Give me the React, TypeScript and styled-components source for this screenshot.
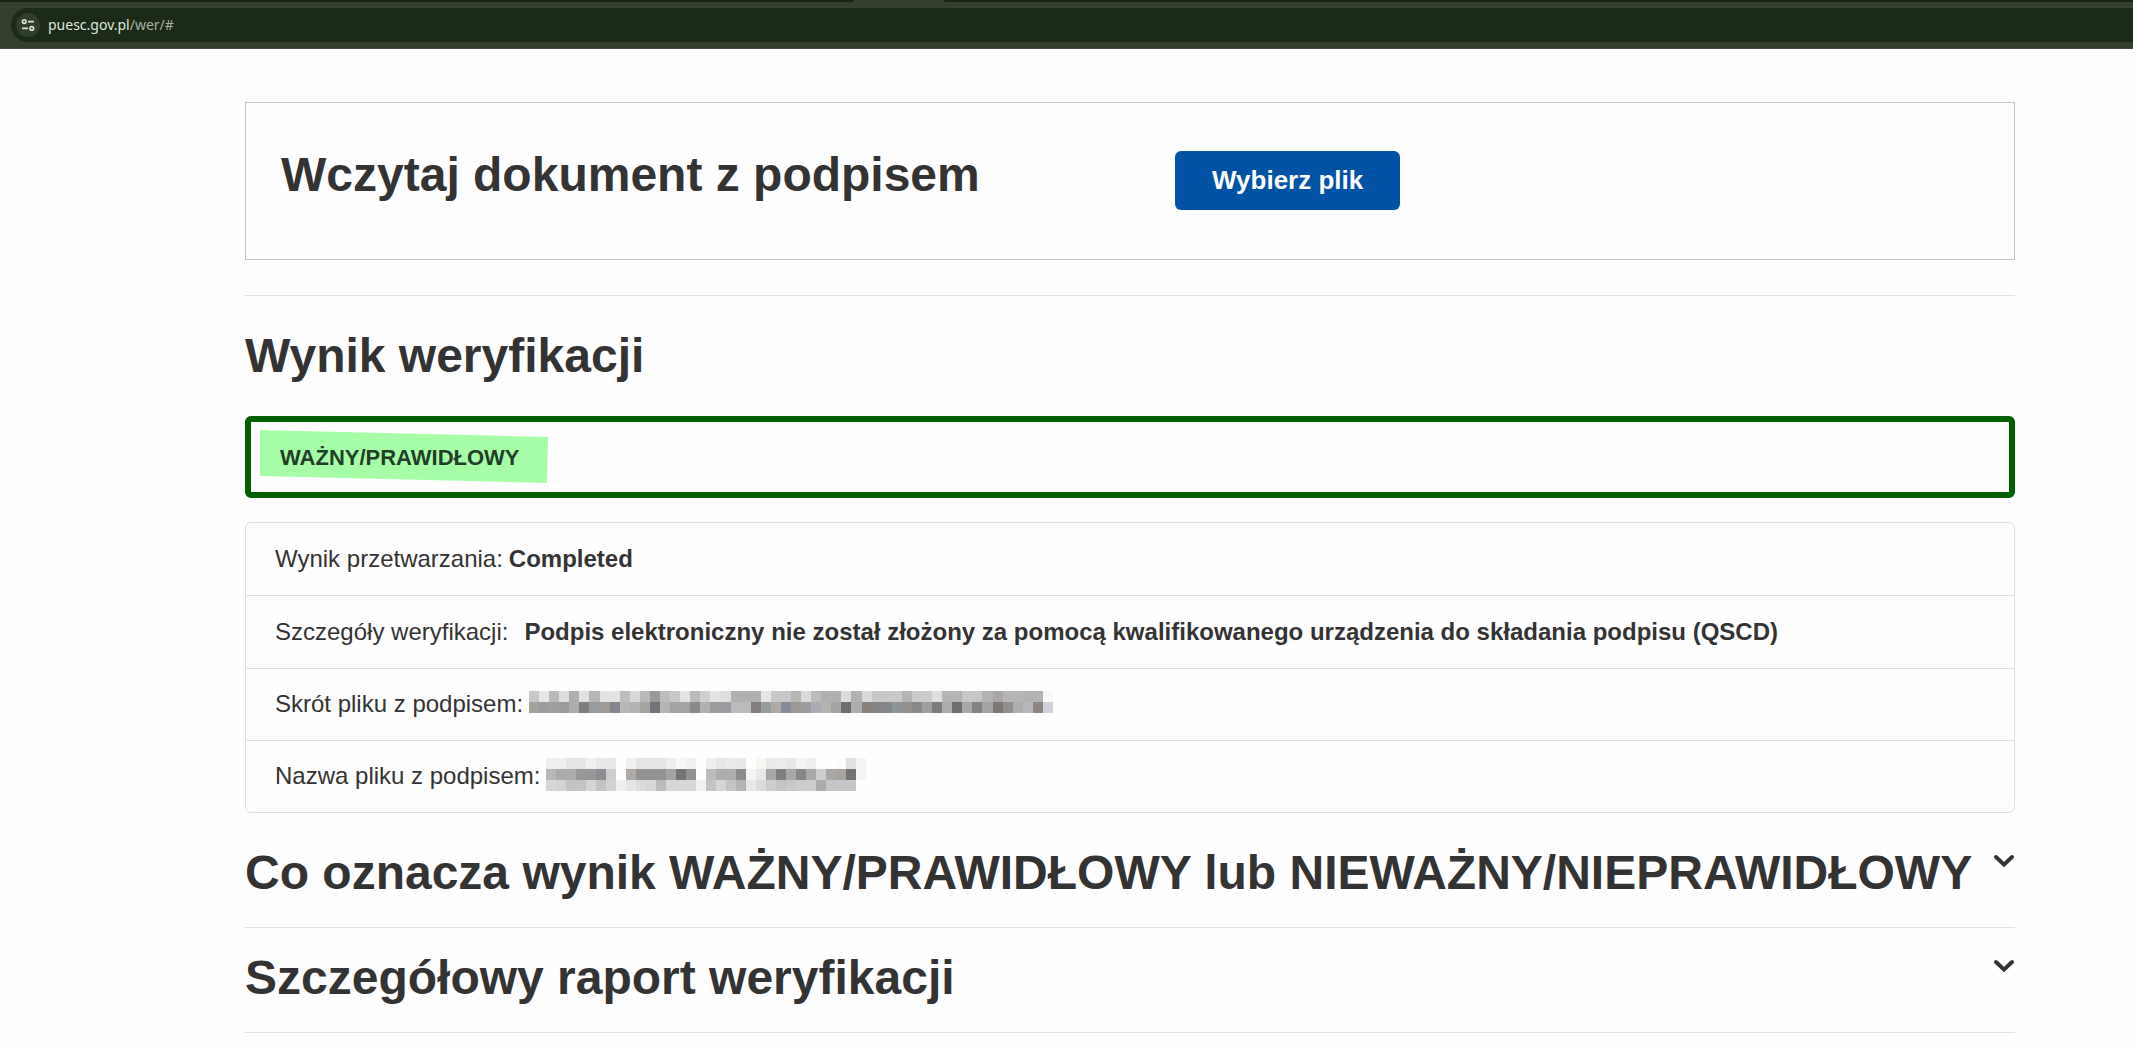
import React, { useRef, useState } from "react";
import styled, { createGlobalStyle } from "styled-components";

const GlobalStyle = createGlobalStyle`
  *, *::before, *::after { box-sizing: border-box; }
  body {
    margin: 0;
    background: #fefefe;
    color: #333333;
    font-family: "Liberation Sans", Arial, sans-serif;
    font-size: 24px;
    line-height: 36px;
  }
`;

const BrowserBar = styled.header`
  background: #333f2f;
  border-bottom: 1px solid #4a4b45;
`;

const TabStrip = styled.div`
  display: flex;
  height: 2px;
  padding-left: 40%;
  background: #172413;
`;

const ActiveTab = styled.div`
  width: 92px;
  border-radius: 2px 2px 0 0;
  background: #333f2f;
`;

const AddressBar = styled.div`
  display: flex;
  align-items: center;
  gap: 8px;
  height: 34px;
  margin: 6px 0 6px 11px;
  padding-left: 5px;
  border-radius: 17px 0 0 17px;
  background: #1c2a18;
`;

const SiteInfo = styled.button`
  display: grid;
  place-items: center;
  width: 24px;
  height: 24px;
  padding: 0;
  border: 0;
  border-radius: 50%;
  background: #303e2d;
  color: #dbe6d4;
`;

const Url = styled.div`
  color: #a9b3a4;
  font-family: "Noto Sans", sans-serif;
  font-size: 14px;
  line-height: 20px;
`;

const Host = styled.span`
  color: #dfe6da;
`;

const Page = styled.main`
  padding: 53px 118px 0 245px;
`;

const Heading = styled.h2`
  margin: 0;
  font-size: 48px;
  font-weight: 700;
  line-height: 58px;
`;

const UploadCard = styled.section`
  display: grid;
  grid-template-columns: 894px 1fr;
  align-items: start;
  padding: 43px 35px 49px;
  border: 1px solid #c2c2c2;
`;

const PickButton = styled.button`
  justify-self: start;
  margin-top: 5px;
  padding: 12px 37px;
  border: 0;
  border-radius: 6px;
  background: #0052a5;
  color: #ffffff;
  font: 700 26px/35px "Liberation Sans", Arial, sans-serif;
`;

const Divider = styled.hr`
  margin: 35px 0 31px;
  border: 0;
  border-top: 1px solid #e0e0e0;
`;

const StatusBox = styled.div`
  margin-top: 31px;
  padding: 18px 29px 16px;
  border: 6px solid #005f00;
  border-radius: 6px;
  font-size: 22px;
  font-weight: 700;
`;

const Marked = styled.strong`
  position: relative;
  display: inline-block;
  color: #1f4027;
  isolation: isolate;
`;

const Marker = styled.svg`
  position: absolute;
  z-index: -1;
  top: -10px;
  left: -20px;
  width: 288px;
  height: 53px;
`;

const Details = styled.ul`
  display: grid;
  grid-auto-rows: 1fr;
  min-height: 291px;
  margin: 24px 0 10px;
  padding: 0;
  border: 1px solid #dedede;
  border-radius: 6px;
  list-style: none;
`;

const DetailRow = styled.li<{ $gap?: number }>`
  display: flex;
  align-items: center;
  gap: ${({ $gap = 6 }) => $gap}px;
  padding: 17px 29px;

  & + & {
    border-top: 1px solid #dedede;
  }
`;

const Mosaic = styled.svg<{ $width: number; $rows: number }>`
  width: ${({ $width }) => $width}px;
  height: ${({ $rows }) => $rows * 11}px;
  margin-bottom: 4px;
`;

const AccordionItem = styled.section`
  border-bottom: 1px solid #e0e0e0;
`;

const AccordionButton = styled.button`
  display: flex;
  justify-content: space-between;
  align-items: flex-start;
  width: 100%;
  padding: 21px 0 25px;
  border: 0;
  background: none;
  color: inherit;
  font: inherit;
  text-align: left;
`;

const Chevron = styled.svg`
  flex: none;
  width: 22px;
  height: 22px;
  margin-top: 7px;
`;

const Panel = styled.p`
  margin: 0 0 24px;
`;

const hashCells = [
  "c8c6c6 e6e6e6 b9b9b9 dcdcdc aeaeae e0e0e0 b6b6b6 e2e2e2 e4e4e4 bdbdbd d8d8d8 b9b9b9 999999 bcbcbc c8c8c8 e3e3e3 bbbbbb d0d0d0 e3e3e3 dedede b0b0b0 b0b0b0 b0b0b0 e6e6e8 c8c8c8 c8c8c8 bab6b6 dadada b9bcbc b0b0b0 b0b0b0 dcdcdc b2b2b2 d8d8d8 c9c9c9 c9c9c9 c9c9c9 b4b4b4 cbcbcb cbcbcb dedede b4b4b4 b4b4b4 c7c7c7 c7c5c7 b3b3b3 a9a6a5 b5b5b5 b5b5b5 b3b3b3 b3b3b3 f8f8fa",
  "a5a29e 9a9b9d 9c9ea0 9a9a9b b0aead 7f7d7d 989a9b a09a96 85858f b8b8b8 b4b2b0 a3a5a3 737377 b4b4b4 a3a3a3 a3a3a3 8b8989 b0b2b2 9e9c9a 9a9c9f bbbbbb bbbbbb 827e7d 999c9d adaaa5 868a9a 9a9895 9c9c9f a9adb3 b4b4b5 a8a4a2 6d6d6d adadad 88807c 858585 858688 8b959a 97918b 8a8a8a a29e9e 7a7c7f b0acac 6e6e6e a6a8aa 808284 a3a3a3 7d7873 8f8f8f adadad b9b9bd 8b8681 d0d3dc",
];

const nameCells = [
  "efefef efefef e5e5e5 e5e5e5 f0f0f0 e6e8ea e6e8e8 fefefe f2f0ee e4e4e4 e6e6e6 e3e5e6 eeeeee f7f7f7 f1f1f1 fefefe eeeeee e6e6e8 e9e9e9 e8e8e8 fefefe f6f6f3 e9e9e9 ececee e6e6e6 f4f4f3 eeeeee fefefe fefefe fdfcfb e0e0e0 f5f5f5",
  "b8b8b8 acabaa aaacae 999896 979797 8e8e92 cccfd2 fefefe b0aaa7 919293 919293 909294 a3a3a3 747474 909294 fefefe bcbcbc acadae adaeae 8c8c8c f2f5f8 e8e8e4 a6a6a6 808080 a8a8a8 868686 a9a9a9 cfcdce a6a8a9 a9a39d 737373 f5f5f5",
  "d5d5d5 d3d3d3 c3c3c4 c4c4c4 d5d5d5 c3c3c3 d0d3d3 efefef e5e5e5 dcdcdc d8d8d8 bbbbbb d8d8d8 d8d8d8 d8d8d8 f0f0f0 c3c3c3 d5d5d5 c4c4c4 b4b4b4 e8e8e8 dcdcdc cdcdcd c4c4c4 c8c8c8 cdcdcd cdcdcd adabab c3c6c8 c6c6c6 c6c6c6 fefefe",
];

function PixelMosaic({ cells, width }: { cells: string[]; width: number }) {
  const rows = cells.map((row) => row.split(" "));
  return (
    <Mosaic
      $width={width}
      $rows={rows.length}
      viewBox={`0 0 ${rows[0].length} ${rows.length}`}
      preserveAspectRatio="none"
      shapeRendering="crispEdges"
      aria-hidden="true"
    >
      {rows.map((row, y) =>
        row.map((color, x) => (
          <rect key={`${x}-${y}`} x={x} y={y} width="1" height="1" fill={`#${color}`} />
        ))
      )}
    </Mosaic>
  );
}

function Accordion({ title, children }: { title: string; children?: React.ReactNode }) {
  const [open, setOpen] = useState(false);
  return (
    <AccordionItem>
      <Heading>
        <AccordionButton type="button" aria-expanded={open} onClick={() => setOpen(!open)}>
          {title}
          <Chevron viewBox="0 0 22 22" fill="none" aria-hidden="true">
            <path d="M3 6 11 13.6 19 6" stroke="#333333" strokeWidth="4" strokeLinecap="round" />
          </Chevron>
        </AccordionButton>
      </Heading>
      {open && children && <Panel>{children}</Panel>}
    </AccordionItem>
  );
}

export default function App() {
  const fileInput = useRef<HTMLInputElement>(null);

  return (
    <>
      <GlobalStyle />
      <BrowserBar>
        <TabStrip>
          <ActiveTab />
        </TabStrip>
        <AddressBar>
          <SiteInfo type="button" aria-label="puesc.gov.pl">
            <svg width="14" height="14" viewBox="0 0 14 14" fill="none" stroke="currentColor" strokeWidth="1.6" aria-hidden="true">
              <circle cx="3.2" cy="3.6" r="1.8" />
              <path d="M7 3.6h6M1 10.4h6" />
              <circle cx="10.8" cy="10.4" r="1.8" />
            </svg>
          </SiteInfo>
          <Url>
            <Host>puesc.gov.pl</Host>/wer/#
          </Url>
        </AddressBar>
      </BrowserBar>

      <Page>
        <UploadCard>
          <Heading>Wczytaj dokument z podpisem</Heading>
          <PickButton type="button" onClick={() => fileInput.current?.click()}>
            Wybierz plik
          </PickButton>
          <input ref={fileInput} type="file" hidden />
        </UploadCard>
        <Divider />

        <section>
          <Heading>Wynik weryfikacji</Heading>
          <StatusBox>
            <Marked>
              <Marker viewBox="0 0 288 53" aria-hidden="true">
                <path d="M0 0 288 7 287 53 0 46Z" fill="#a6ffa6" />
              </Marker>
              WAŻNY/PRAWIDŁOWY
            </Marked>
          </StatusBox>
          <Details>
            <DetailRow>
              Wynik przetwarzania: <strong>Completed</strong>
            </DetailRow>
            <DetailRow $gap={16}>
              Szczegóły weryfikacji:
              <strong>
                Podpis elektroniczny nie został złożony za pomocą kwalifikowanego urządzenia do składania podpisu (QSCD)
              </strong>
            </DetailRow>
            <DetailRow>
              Skrót pliku z podpisem: <PixelMosaic cells={hashCells} width={524} />
            </DetailRow>
            <DetailRow>
              Nazwa pliku z podpisem: <PixelMosaic cells={nameCells} width={320} />
            </DetailRow>
          </Details>
        </section>

        <Accordion title="Co oznacza wynik WAŻNY/PRAWIDŁOWY lub NIEWAŻNY/NIEPRAWIDŁOWY" />
        <Accordion title="Szczegółowy raport weryfikacji" />
      </Page>
    </>
  );
}
